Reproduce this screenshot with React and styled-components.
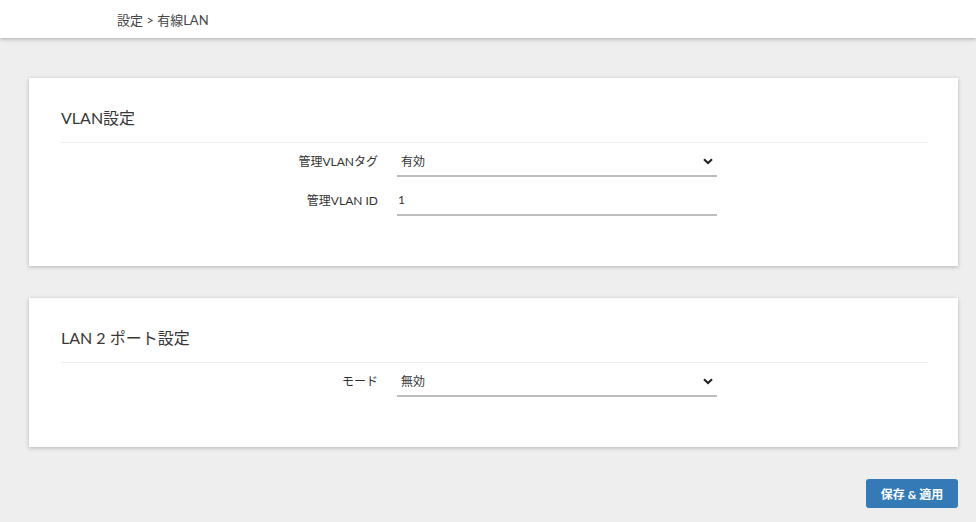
import React from "react";
import styled, { createGlobalStyle } from "styled-components";

const GlobalStyle = createGlobalStyle`
  html, body {
    margin: 0;
    padding: 0;
    background: #eeeeee;
    font-family: "Lato", "Noto Sans CJK JP", sans-serif;
    color: #333;
  }
`;

const Header = styled.div`
  height: 38px;
  background: #fff;
  box-shadow: 0 1px 4px rgba(0, 0, 0, 0.3);
  display: flex;
  align-items: center;
  padding-left: 117px;
  font-size: 13px;
  color: #444;
`;

const Main = styled.div`
  padding: 40px 18px 32px 29px;
  display: flex;
  flex-direction: column;
  gap: 32px;
`;

const Card = styled.div`
  background: #fff;
  box-shadow: 0 1px 4px rgba(0, 0, 0, 0.25);
  padding: 30px 30px 45px 32px;
`;

const CardTitle = styled.h2`
  margin: 0;
  font-size: 16px;
  font-weight: 400;
  line-height: 20px;
  color: #383838;
  padding-bottom: 14px;
  border-bottom: 1px solid #eeeeee;
`;

const Row = styled.div`
  display: flex;
  align-items: center;
  gap: 19px;
  height: 39px;
`;

const Label = styled.label`
  width: 317px;
  text-align: right;
  font-size: 12px;
  color: #333;
  padding-bottom: 4px;
`;

const Field = styled.div`
  position: relative;
  width: 320px;
  height: 28px;
  border-bottom: 2px solid #bdbdbd;
  display: flex;
  align-items: center;
  padding: 0 0 3px ${(p) => (p.$select ? 4 : 1)}px;
  box-sizing: border-box;
  font-size: 12px;
  color: #333;
`;

const Chevron = styled.svg`
  position: absolute;
  right: 4px;
  top: 9px;
`;

const Footer = styled.div`
  display: flex;
  justify-content: flex-end;
  padding: 0 18px 0 0;
`;

const Button = styled.button`
  width: 92px;
  height: 29px;
  border: none;
  border-radius: 3px;
  background: #337ab7;
  color: #fff;
  font-family: "Lato", "Noto Sans CJK JP", sans-serif;
  font-weight: 700;
  font-size: 12px;
  cursor: pointer;
`;

function Select({ value }) {
  return (
    <Field $select>
      {value}
      <Chevron width="10" height="7" viewBox="0 0 10 7">
        <path d="M1 1.2 L5 5 L9 1.2" fill="none" stroke="#222" strokeWidth="2" />
      </Chevron>
    </Field>
  );
}

export default function App() {
  return (
    <>
      <GlobalStyle />
      <Header>設定 &gt; 有線LAN</Header>
      <Main>
        <Card>
          <CardTitle>VLAN設定</CardTitle>
          <Row>
            <Label>管理VLANタグ</Label>
            <Select value="有効" />
          </Row>
          <Row>
            <Label>管理VLAN ID</Label>
            <Field>1</Field>
          </Row>
        </Card>
        <Card>
          <CardTitle>LAN 2 ポート設定</CardTitle>
          <Row>
            <Label>モード</Label>
            <Select value="無効" />
          </Row>
        </Card>
      </Main>
      <Footer>
        <Button>保存 &amp; 適用</Button>
      </Footer>
    </>
  );
}
